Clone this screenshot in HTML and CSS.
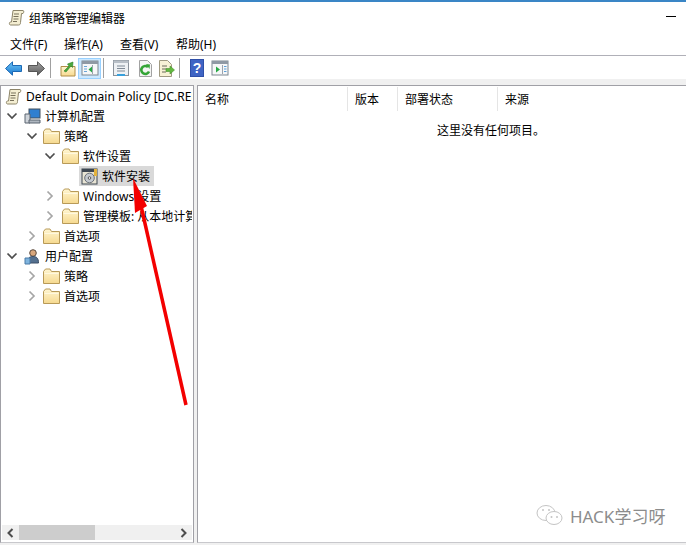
FILE: index.html
```html
<!DOCTYPE html>
<html lang="zh-CN">
<head>
<meta charset="utf-8">
<title>组策略管理编辑器</title>
<link rel="stylesheet" href="styles.css">
</head>
<body>
<svg class="defs" width="0" height="0" aria-hidden="true">
  <defs>
    <linearGradient id="fg" x1="0" y1="0" x2="0" y2="1"><stop offset="0" stop-color="#fff6d2"/><stop offset="1" stop-color="#f6d98f"/></linearGradient>
    <linearGradient id="ba" x1="0" y1="0" x2="0" y2="1"><stop offset="0" stop-color="#6cc4f5"/><stop offset="1" stop-color="#1a78d0"/></linearGradient>
    <linearGradient id="ga" x1="0" y1="0" x2="0" y2="1"><stop offset="0" stop-color="#a5a5a5"/><stop offset="1" stop-color="#5a5a5a"/></linearGradient>
    <symbol id="folder" viewBox="0 0 17 16">
      <path d="M.5 3.500v12h16V3.500H8.500L7 1H2.500z" fill="url(#fg)" stroke="#b89a58"/>
      <path d="M1.500 5.500h14" stroke="#fff8de" fill="none"/>
    </symbol>
    <symbol id="scroll" viewBox="0 0 17 17">
      <path d="M5 1.500h10c1 0 1 2 0 3h-1.500l-1 9c0 2-1 2.500-2 2.500H2.500c-1.500 0-1.500-3 0-3H3.500z" fill="#f4eed2" stroke="#8c8468"/>
      <path d="M6 5h5M5.500 7.500h5M5.500 10h5M5 12.500h4" stroke="#77705a" fill="none"/>
    </symbol>
    <symbol id="down" viewBox="0 0 12 12"><path d="M1.500 3.500 6 8l4.500-4.500" fill="none" stroke="#4d4d4d" stroke-width="1.700"/></symbol>
    <symbol id="right" viewBox="0 0 12 12"><path d="M3.500 1.500 8 6l-4.500 4.500" fill="none" stroke="#a6a6a6" stroke-width="1.700"/></symbol>
    <symbol id="win" viewBox="0 0 18 16">
      <rect x="1" y="1" width="16" height="14" fill="#f6f7f8" stroke="#7d8792"/>
      <rect x="1" y="1" width="16" height="3" fill="#8f99a4"/>
      <path d="M11.500 5v9" stroke="#9aa3ad"/>
    </symbol>
  </defs>
</svg>

<div class="window">
  <header class="titlebar">
    <svg class="title-icon" width="17" height="17"><use href="#scroll"/></svg>
    <span class="title-text">组策略管理编辑器</span>
    <span class="minimize"></span>
  </header>

  <nav class="menubar">
    <span class="menu-item">文件(F)</span>
    <span class="menu-item">操作(A)</span>
    <span class="menu-item">查看(V)</span>
    <span class="menu-item">帮助(H)</span>
  </nav>

  <div class="toolbar">
    <span class="tool"><svg width="17" height="15" viewBox="0 0 17 15"><path d="M.5 7.500 7.500.8v3.700h9v6h-9v3.700z" fill="url(#ba)" stroke="#1c68b4"/></svg></span>
    <span class="tool"><svg width="17" height="15" viewBox="0 0 17 15"><path d="M16.500 7.500 9.500.8v3.700h-9v6h9v3.700z" fill="url(#ga)" stroke="#555"/></svg></span>
    <span class="sep"></span>
    <span class="tool"><svg width="16" height="17" viewBox="0 0 16 17"><path d="M1 6.500h14v9.500H1z" fill="url(#fg)" stroke="#b08e48"/><path d="M4 11 9 6 7.500 4 13 2l-.5 5.500L11 6l-5 6z" fill="#49a83b" stroke="#2c7d28" stroke-width=".6"/></svg></span>
    <span class="tool tool-on"><svg width="18" height="16"><use href="#win"/><path d="M3 6.500h3M3 9h3M3 11.500h3" stroke="#6aa5d8"/><path d="M11 6.500v6l-3.500-3z" fill="#27a844"/></svg></span>
    <span class="sep sep-b"></span>
    <span class="tool"><svg width="16" height="16" viewBox="0 0 16 16"><rect x=".5" y=".5" width="15" height="15" fill="#eef1f4" stroke="#8a929b"/><rect x=".5" y=".5" width="15" height="2.500" fill="#b8bfc7"/><path d="M4 6h8M4 8.500h8M4 11h8" stroke="#7f8a96"/><rect x="4" y="14" width="8" height="2" fill="#37a0dc"/></svg></span>
    <span class="tool tool-r"><svg width="15" height="17" viewBox="0 0 15 17"><path d="M1.500.5h8l4 4v12h-12z" fill="#f5f5f5" stroke="#a2a2a2"/><path d="M11 11.500a4 4 0 1 1-1-4.500" fill="none" stroke="#35a537" stroke-width="2.600"/><path d="M8 4l4 .5L11.500 9z" fill="#35a537"/></svg></span>
    <span class="tool tool-c"><svg width="17" height="17" viewBox="0 0 17 17"><path d="M1.500.5h8l4 4v12h-12z" fill="#f8f2d6" stroke="#a09a82"/><path d="M4 6h5M4 9h4M4 12h4" stroke="#6d6a5a"/><path d="M8 8.500h4V6l4.500 4-4.500 4v-2.500H8z" fill="#62b83f" stroke="#44922b" stroke-width=".6"/></svg></span>
    <span class="sep sep-c"></span>
    <span class="tool"><svg width="14" height="18" viewBox="0 0 14 18"><rect width="14" height="18" fill="#2f4fa8"/><rect x="1" y="1" width="12" height="16" fill="#3f64c4"/><text x="7" y="14" class="help-q">?</text></svg></span>
    <span class="tool"><svg width="18" height="16"><use href="#win"/><path d="M5 6.500v6l4-3z" fill="#27a844"/><path d="M13 6.500h2.500M13 9h2.500M13 11.500h2.500" stroke="#5a9fd8"/></svg></span>
  </div>

  <main class="panes">
    <section class="tree-pane">
      <div class="tree">
        <div class="row lv0"><svg class="ico" width="17" height="17"><use href="#scroll"/></svg><span>Default Domain Policy [DC.REDTEAM.LOCAL] 策略</span></div>
        <div class="row lv1"><svg class="chev" width="12" height="12"><use href="#down"/></svg><svg class="ico" width="17" height="17" viewBox="0 0 17 17"><rect x="5" y="1" width="11" height="9" fill="#2f7fd0" stroke="#43505e"/><path d="M1 6h5v9H1z" fill="#cfd4da" stroke="#5a6470"/><path d="M5 12h11v3H5z" fill="#aeb6bf" stroke="#5a6470"/></svg><span>计算机配置</span></div>
        <div class="row lv2"><svg class="chev" width="12" height="12"><use href="#down"/></svg><svg class="ico" width="17" height="16"><use href="#folder"/></svg><span>策略</span></div>
        <div class="row lv3"><svg class="chev" width="12" height="12"><use href="#down"/></svg><svg class="ico" width="17" height="16"><use href="#folder"/></svg><span>软件设置</span></div>
        <div class="row lv4"><span class="selected"><svg class="ico" width="17" height="17" viewBox="0 0 17 17"><rect x="1" y="1" width="15" height="15" fill="#e8e4d4" stroke="#3f4852"/><rect x="1" y="1" width="15" height="3" fill="#3f4852"/><rect x="13" y="1" width="3" height="7" fill="#e3b23c"/><circle cx="8.500" cy="10" r="4.800" fill="#c4c9cf" stroke="#6a7078"/><circle cx="8.500" cy="10" r="1.300" fill="#fff" stroke="#555"/></svg><span>软件安装</span></span></div>
        <div class="row lv3"><svg class="chev" width="12" height="12"><use href="#right"/></svg><svg class="ico" width="17" height="16"><use href="#folder"/></svg><span>Windows 设置</span></div>
        <div class="row lv3"><svg class="chev" width="12" height="12"><use href="#right"/></svg><svg class="ico" width="17" height="16"><use href="#folder"/></svg><span>管理模板: 从本地计算机检索的策略定义</span></div>
        <div class="row lv2"><svg class="chev" width="12" height="12"><use href="#right"/></svg><svg class="ico" width="17" height="16"><use href="#folder"/></svg><span>首选项</span></div>
        <div class="row lv1"><svg class="chev" width="12" height="12"><use href="#down"/></svg><svg class="ico" width="17" height="17" viewBox="0 0 17 17"><circle cx="9" cy="5" r="3.300" fill="#d9a77c" stroke="#5a4a3e"/><path d="M3.500 15c0-5 2-6.500 5.500-6.500s5.500 1.500 5.500 6.500z" fill="#54708f" stroke="#3d4f66"/><path d="M1 10h5v6H1z" fill="#7fb4de" stroke="#4a7aa6"/></svg><span>用户配置</span></div>
        <div class="row lv2"><svg class="chev" width="12" height="12"><use href="#right"/></svg><svg class="ico" width="17" height="16"><use href="#folder"/></svg><span>策略</span></div>
        <div class="row lv2"><svg class="chev" width="12" height="12"><use href="#right"/></svg><svg class="ico" width="17" height="16"><use href="#folder"/></svg><span>首选项</span></div>
      </div>
      <div class="hscroll">
        <span class="arrow-btn"><svg width="9" height="10" viewBox="0 0 9 10"><path d="M6.500 1 2.500 5l4 4" fill="none" stroke="#4d4d4d" stroke-width="2"/></svg></span>
        <span class="track"><span class="thumb"></span></span>
        <span class="arrow-btn"><svg width="9" height="10" viewBox="0 0 9 10"><path d="M2.500 1l4 4-4 4" fill="none" stroke="#4d4d4d" stroke-width="2"/></svg></span>
      </div>
    </section>

    <section class="list-pane">
      <div class="list-head">
        <span class="col col-name">名称</span>
        <span class="col col-ver">版本</span>
        <span class="col col-state">部署状态</span>
        <span class="col col-src">来源</span>
      </div>
      <p class="empty">这里没有任何项目。</p>
    </section>
  </main>
</div>

<svg class="red-arrow" width="686" height="545" viewBox="0 0 686 545" aria-hidden="true">
  <path d="M186 405 141.500 208" fill="none" stroke="#f30000" stroke-width="3.500"/>
  <path d="M133 178 135 213 147 206z" fill="#f30000"/>
</svg>

<div class="watermark">
  <svg width="28" height="24" viewBox="0 0 28 24"><g fill="#fff" stroke="#c4c4c4"><ellipse cx="10" cy="9" rx="9" ry="7.500"/><ellipse cx="18" cy="14" rx="8" ry="6.500"/></g><g fill="#c4c4c4"><circle cx="7" cy="6" r="1"/><circle cx="13" cy="6" r="1"/><circle cx="15.500" cy="13" r="1"/><circle cx="21" cy="13" r="1"/></g></svg>
  <span class="wm-text">HACK学习呀</span>
</div>
</body>
</html>
```

FILE: styles.css
```css
* { box-sizing: border-box; }
html, body { margin: 0; padding: 0; }
body {
  width: 686px;
  height: 545px;
  overflow: hidden;
  position: relative;
  background: #fff;
  color: #000;
  font-family: "Noto Sans", "Noto Sans CJK SC", sans-serif;
  font-size: 12px;
}
.defs { position: absolute; }
.window {
  height: 545px;
  display: flex;
  flex-direction: column;
  border-top: 2px solid #3a86c6;
}
.titlebar {
  height: 31px;
  flex: none;
  display: flex;
  align-items: center;
  padding: 0 10px 0 8px;
}
.title-icon { margin-right: 4px; }
.title-text { flex: 1; }
.minimize { width: 10px; height: 1px; background: #000; margin-bottom: 2px; }
.menubar {
  height: 22px;
  flex: none;
  display: flex;
  align-items: center;
  padding-left: 10px;
}
.menu-item { width: 54px; white-space: nowrap; }
.menu-item:nth-child(2) { width: 56px; }
.menu-item:nth-child(3) { width: 56px; }
.toolbar {
  height: 24px;
  flex: none;
  display: flex;
  align-items: center;
  padding: 1px 0 0 2px;
  border-top: 1px solid #b0b0b8;
}
.tool {
  width: 23px;
  height: 21px;
  flex: none;
  display: flex;
  align-items: center;
  justify-content: center;
}
.tool-on { background: #cce8ff; border: 1px solid #99d1ff; margin-left: -1px; }
.tool-r { margin-left: 2px; }
.tool-c { margin-left: -2px; }
.sep { width: 1px; height: 20px; flex: none; background: #a0a0a0; margin: 0 5px 0 2px; }
.sep-b { margin: 0 5px 0 2px; }
.sep-c { margin: 0 5px 0 1px; }
.help-q { fill: #fff; font-size: 14px; font-weight: 700; text-anchor: middle; font-family: "Liberation Sans", sans-serif; }
.panes {
  flex: 1;
  min-height: 0;
  display: flex;
  gap: 3px;
  background: #f0f0f0;
  padding-top: 6px;
  padding-bottom: 2px;
}
.tree-pane {
  width: 194px;
  flex: none;
  display: flex;
  flex-direction: column;
  background: #fff;
  border: 1px solid #a0a0a6;
  border-bottom: 1px solid #c8c8cc;
  padding: 0 1px 2px 1px;
  overflow: hidden;
}
.tree { flex: 1; min-height: 0; overflow: hidden; }
.row {
  height: 20px;
  display: flex;
  align-items: center;
  white-space: nowrap;
}
.lv0 { padding-left: 3px; }
.lv1 { padding-left: 4px; }
.lv2 { padding-left: 23px; }
.lv3 { padding-left: 42px; }
.lv4 { padding-left: 77px; }
.chev { flex: none; margin-right: 5px; }
.ico { flex: none; margin-right: 4px; }
.lv1 .chev { margin-right: 6px; }
.lv2 .chev { margin-right: 6px; margin-left: 1px; }
.lv2 .ico { margin-left: -1px; margin-right: 4px; }
.lv3 .chev { margin-right: 6px; }
.selected {
  display: flex;
  align-items: center;
  height: 20px;
  width: 75px;
  padding-left: 2px;
  background: #d9d9d9;
}
.hscroll {
  height: 15px;
  flex: none;
  display: flex;
  align-items: center;
  background: #f0f0f0;
}
.arrow-btn {
  width: 17px;
  flex: none;
  display: flex;
  justify-content: center;
}
.track { flex: 1; height: 15px; display: block; }
.thumb { display: block; width: 76px; height: 15px; background: #cdcdcd; }
.list-pane {
  flex: 1;
  min-width: 0;
  background: #fff;
  border: 1px solid #a0a0a6;
  border-right: 0;
  border-bottom: 1px solid #c8c8cc;
}
.list-head {
  height: 24px;
  display: flex;
  margin-top: 1px;
}
.col {
  display: flex;
  align-items: center;
  padding-left: 7px;
  border-right: 1px solid #e5e5e5;
  flex: none;
}
.col-name { width: 150px; }
.col-ver { width: 50px; }
.col-state { width: 100px; }
.col-src { width: 80px; border-right: 0; }
.empty { margin: 10px 0 0 239px; line-height: 20px; }
.red-arrow { position: absolute; left: 0; top: 0; pointer-events: none; }
.watermark {
  position: absolute;
  left: 536px;
  top: 503px;
  display: flex;
  align-items: center;
  gap: 6px;
  color: #8c8c8c;
}
.wm-text { font-size: 17px; }
```
